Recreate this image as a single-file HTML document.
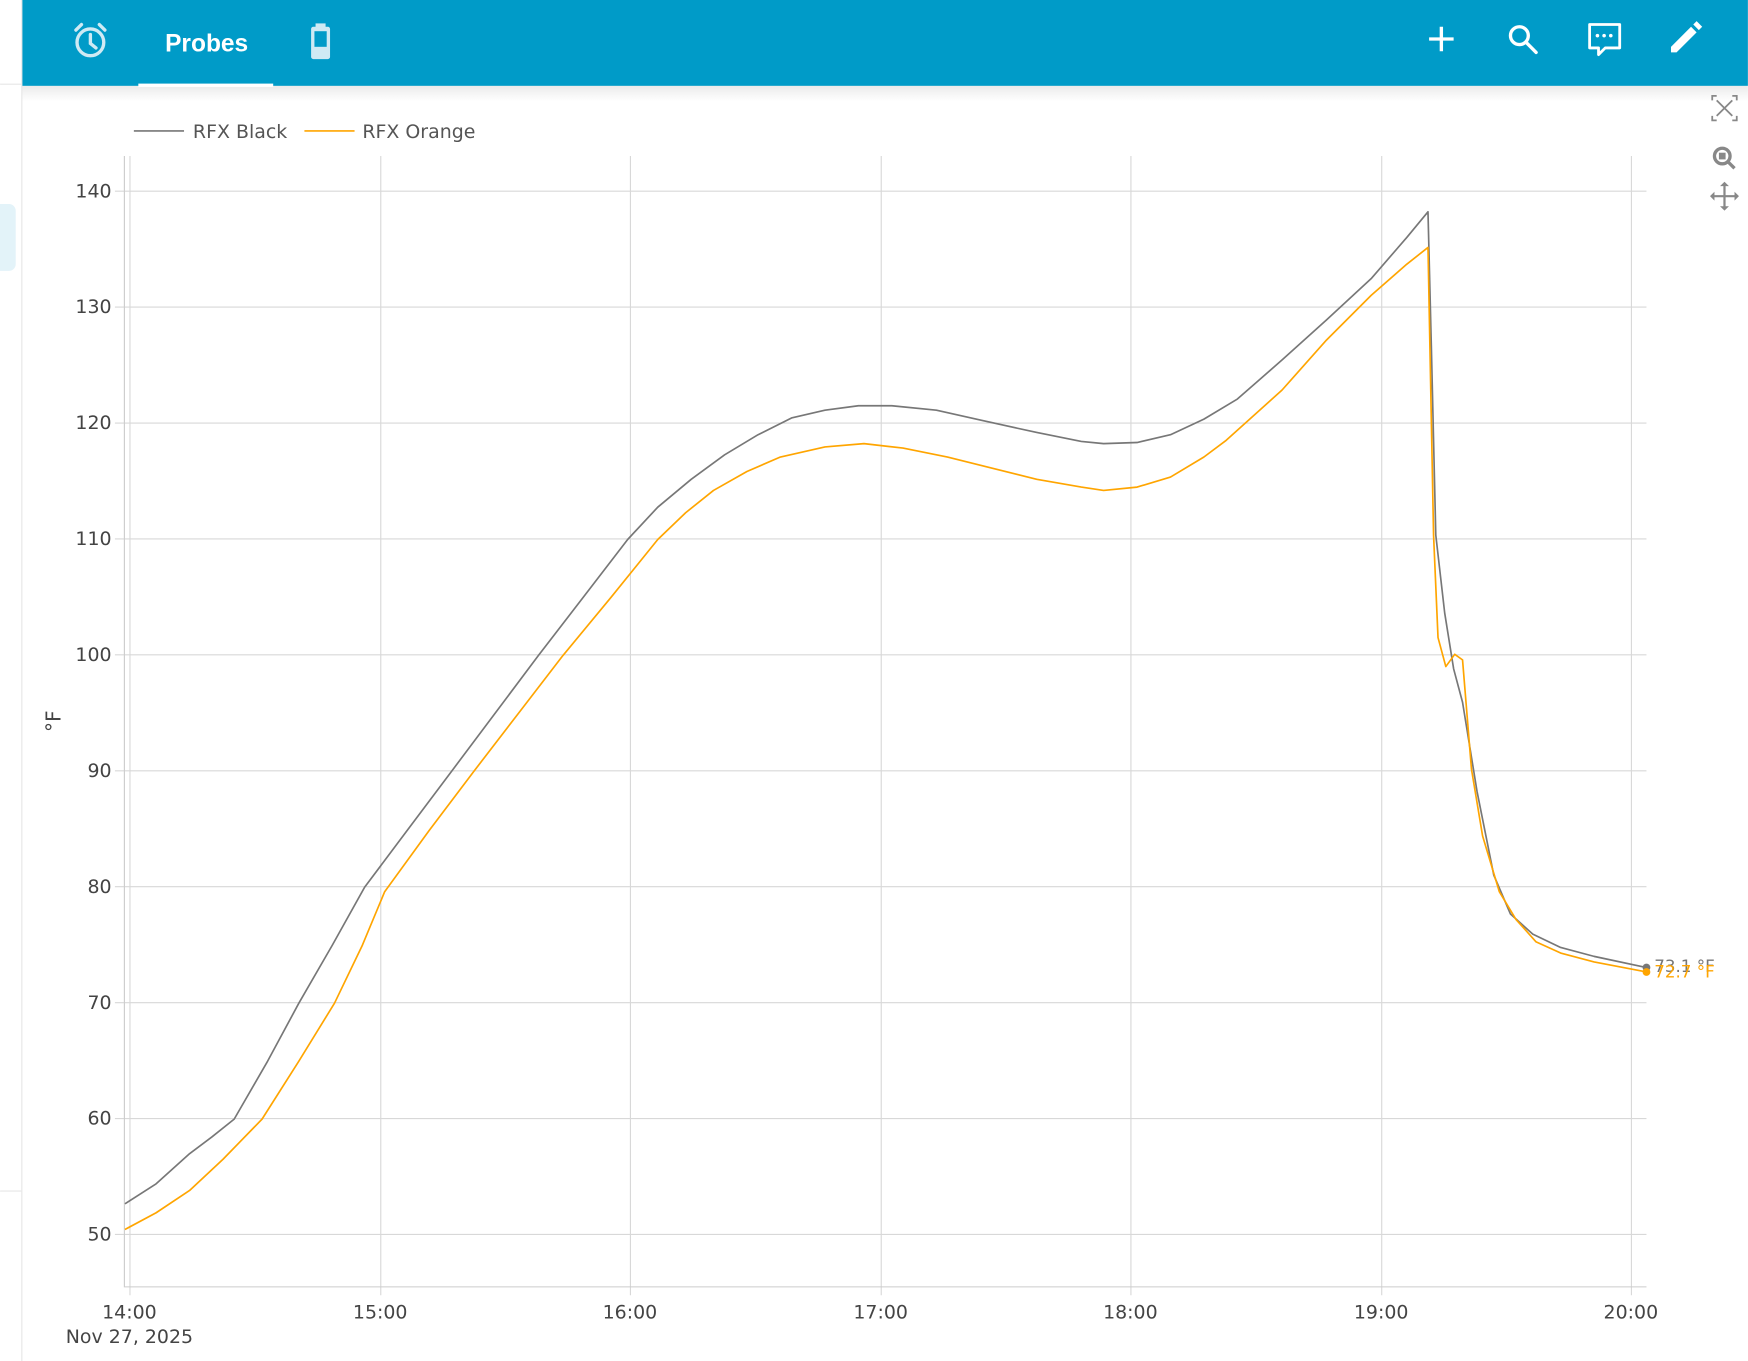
<!DOCTYPE html>
<html><head><meta charset="utf-8"><style>
html,body{margin:0;padding:0;background:#fff;width:1748px;height:1361px;overflow:hidden}
svg{display:block}
text{font-family:"DejaVu Sans","Liberation Sans",sans-serif}
</style></head><body>
<svg width="1748" height="1361" viewBox="0 0 1568 1221" xmlns="http://www.w3.org/2000/svg">
<defs><linearGradient id="sh" x1="0" y1="0" x2="0" y2="1"><stop offset="0" stop-color="#000" stop-opacity="0.08"/><stop offset="1" stop-color="#000" stop-opacity="0"/></linearGradient></defs>
<rect width="1568" height="1221" fill="#fff"/>
<line x1="19.5" y1="0" x2="19.5" y2="1221" stroke="#e6e6e6"/>
<line x1="0" y1="75.5" x2="19" y2="75.5" stroke="#e6e6e6"/>
<line x1="0" y1="1068.5" x2="19" y2="1068.5" stroke="#e6e6e6"/>
<rect x="-6" y="183" width="20" height="60" rx="6" fill="#e3f3f9"/>
<rect x="20" y="0" width="1548" height="77" fill="#009bc8"/>
<rect x="20" y="77" width="1548" height="14" fill="url(#sh)"/>
<rect x="124" y="75" width="121" height="3" fill="#fff"/>
<g stroke="#cfeaf4" stroke-width="3" fill="none" stroke-linecap="round">
<circle cx="81" cy="38" r="12"/><path d="M81 31v8l5 4"/><path d="M68 27l5-5M94 27l-5-5"/></g>
<text x="148" y="46" font-size="22" font-weight="bold" fill="#fff" style="font-family:'Liberation Sans',sans-serif">Probes</text>
<rect x="279" y="24" width="17" height="29" rx="2" fill="#cfeaf4"/><rect x="283" y="21" width="9" height="4" fill="#cfeaf4"/><rect x="282" y="28" width="11" height="14" fill="#009bc8"/>
<g stroke="#fff" stroke-width="3" fill="none">
<path d="M1293 24v22M1282 35h22"/>
<circle cx="1363" cy="32" r="8"/><path d="M1369 38l9 9" stroke-linecap="round"/>
<path d="M1426 22h27v21h-13l-6 6v-6h-8z" stroke-width="2.5" stroke-linejoin="round"/>
</g>
<g fill="#fff"><circle cx="1433" cy="32" r="1.6"/><circle cx="1439" cy="32" r="1.6"/><circle cx="1445" cy="32" r="1.6"/>
<path d="M1499 42l18-18 5 5-18 18h-5z M1519 22l3-3 5 5-3 3z"/></g>
<g stroke="#888" stroke-width="1.6" fill="none">
<path d="M1536 90v-4h4M1554 86h4v4M1558 104v4h-4M1540 108h-4v-4M1540 90l14 14M1554 90l-14 14"/>
<circle cx="1545" cy="140" r="7" stroke-width="3"/><path d="M1550 145l6 6" stroke-width="3"/>
<path d="M1547 165v22M1536 176h22" stroke-width="2"/></g>
<rect x="1542" y="137" width="6" height="6" fill="#888"/>
<g fill="#888"><path d="M1547 163l-4 4h8zM1547 189l-4-4h8zM1534 176l4-4v8zM1560 176l-4-4v8z"/></g>
<line x1="120" y1="117.5" x2="165" y2="117.5" stroke="#777" stroke-width="1.5"/>
<text x="173" y="124" font-size="17" fill="#555">RFX Black</text>
<line x1="273" y1="117.5" x2="318" y2="117.5" stroke="#ffa500" stroke-width="1.5"/>
<text x="325" y="124" font-size="17" fill="#555">RFX Orange</text>
<g stroke="#d8d8d8" stroke-width="1" fill="none">
<path d="M103 171.5H1477M103 275.5H1477M103 379.5H1477M103 483.5H1477M103 587.5H1477M103 691.5H1477M103 795.5H1477M103 899.5H1477M103 1003.5H1477M103 1107.5H1477"/>
<path d="M116.5 140V1162M341.5 140V1162M565.5 140V1162M790.5 140V1162M1014.5 140V1162M1239.5 140V1162M1463.5 140V1162"/>
<path d="M111.5 140V1154.5H1477" stroke="#ccc"/>
</g>
<g font-size="17" fill="#444" text-anchor="end">
<text x="100" y="177">140</text><text x="100" y="281">130</text><text x="100" y="385">120</text><text x="100" y="489">110</text><text x="100" y="593">100</text><text x="100" y="697">90</text><text x="100" y="801">80</text><text x="100" y="905">70</text><text x="100" y="1009">60</text><text x="100" y="1113">50</text></g>
<g font-size="17" fill="#444" text-anchor="middle">
<text x="116" y="1183">14:00</text><text x="341" y="1183">15:00</text><text x="565" y="1183">16:00</text><text x="790" y="1183">17:00</text><text x="1014" y="1183">18:00</text><text x="1239" y="1183">19:00</text><text x="1463" y="1183">20:00</text>
<text x="116" y="1205">Nov 27, 2025</text></g>
<text x="54" y="647" font-size="18" fill="#444" text-anchor="middle" transform="rotate(-90 54 647)">°F</text>
<polyline fill="none" stroke="#777" stroke-width="1.5" stroke-linejoin="round" points="112,1080 140,1062 170,1035 190,1020 210,1004 240,952 268,900 298,848 327,796 366,744 405,692 444,640 483,588 523,536 563,484 590,455 620,430 650,408 680,390 710,375 740,368 770,364 800,364 840,368 880,377 930,388 970,396 990,398 1020,397 1050,390 1080,376 1110,358 1150,323 1190,287 1230,250 1262,213 1281,190 1284,310 1288,480 1296,550 1304,600 1312,630 1325,710 1340,785 1355,820 1375,838 1400,850 1430,858 1477,868"/>
<polyline fill="none" stroke="#ffa500" stroke-width="1.5" stroke-linejoin="round" points="112,1103 140,1088 170,1068 200,1040 235,1004 268,952 300,900 325,848 345,800 385,745 425,692 465,640 505,588 548,536 590,484 615,460 640,440 670,423 700,410 740,401 775,398 810,402 850,410 890,420 930,430 970,437 990,440 1020,437 1050,428 1080,410 1100,395 1150,350 1190,305 1230,265 1262,237 1281,222 1286,480 1290,572 1297,598 1305,587 1312,592 1320,690 1330,750 1345,800 1360,825 1378,845 1400,855 1430,863 1477,872"/>
<circle cx="1477" cy="868" r="3.5" fill="#777"/><circle cx="1477" cy="872" r="3.5" fill="#ffa500"/>
<text x="1484" y="872" font-size="15" fill="#777">73.1 °F</text>
<text x="1484" y="877" font-size="15" fill="#ffa500">72.7 °F</text>
</svg>
</body></html>
